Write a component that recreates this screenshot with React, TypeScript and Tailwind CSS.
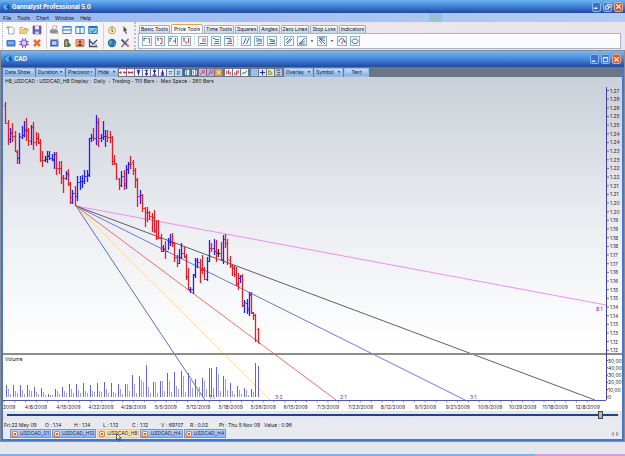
import { useState } from "react"
import type { ReactNode } from "react"

type Tone = "r" | "b" | "k"
// x, high, low, open, close, tone
type Bar = [number, number, number, number, number, Tone]

const bars: Bar[] = [
  [5, 102, 124, 105, 123, "r"], [8, 120, 145, 123, 139, "r"], [10, 128, 143, 139, 133, "b"],
  [12, 123, 142, 132, 136, "r"], [15, 131, 152, 136, 151, "r"], [17, 150, 164, 152, 157, "r"],
  [19, 133, 164, 158, 136, "b"], [22, 126, 139, 137, 135, "b"], [24, 121, 137, 135, 130, "b"],
  [26, 118, 141, 129, 130, "r"], [28, 128, 146, 131, 140, "r"], [31, 125, 145, 141, 127, "b"],
  [33, 122, 150, 127, 142, "r"], [36, 132, 146, 142, 138, "r"], [38, 133, 144, 138, 142, "r"],
  [40, 139, 162, 143, 160, "r"], [42, 151, 167, 160, 160, "r"], [45, 156, 162, 160, 159, "k"],
  [47, 151, 163, 159, 155, "b"], [49, 151, 160, 156, 158, "b"], [52, 154, 161, 158, 159, "b"],
  [54, 152, 169, 160, 154, "b"], [56, 152, 175, 154, 168, "r"], [59, 161, 174, 168, 168, "r"],
  [61, 161, 184, 168, 178, "r"], [63, 175, 193, 177, 178, "r"], [66, 171, 180, 178, 174, "b"],
  [68, 169, 186, 173, 183, "r"], [70, 182, 204, 184, 197, "r"], [72, 190, 204, 202, 193, "b"],
  [75, 186, 206, 193, 196, "r"], [77, 176, 201, 196, 182, "b"], [80, 176, 190, 182, 181, "b"],
  [82, 175, 188, 181, 181, "b"], [84, 170, 184, 181, 176, "b"], [87, 170, 182, 176, 174, "b"],
  [89, 138, 177, 175, 138, "b"], [91, 134, 142, 138, 137, "b"], [93, 128, 141, 137, 138, "r"],
  [96, 115, 145, 138, 122, "b"], [98, 118, 147, 122, 138, "r"], [101, 134, 142, 138, 137, "b"],
  [103, 121, 140, 137, 136, "b"], [105, 130, 147, 136, 136, "b"], [107, 130, 142, 136, 137, "r"],
  [110, 131, 143, 137, 137, "r"], [112, 136, 165, 137, 161, "r"], [114, 155, 165, 161, 163, "r"],
  [116, 163, 180, 163, 177, "r"], [119, 178, 190, 179, 185, "r"], [121, 171, 187, 185, 176, "b"],
  [124, 170, 190, 176, 183, "r"], [126, 165, 189, 185, 169, "b"], [128, 162, 174, 169, 164, "b"],
  [130, 156, 169, 163, 164, "r"], [133, 160, 175, 162, 170, "r"], [135, 168, 188, 170, 179, "r"],
  [137, 178, 207, 180, 196, "r"], [140, 190, 204, 196, 195, "b"], [142, 194, 212, 195, 208, "r"],
  [145, 207, 227, 208, 212, "r"], [147, 207, 222, 212, 212, "r"], [149, 211, 220, 212, 216, "r"],
  [152, 213, 232, 216, 217, "r"], [154, 210, 233, 217, 230, "r"], [156, 220, 240, 231, 238, "r"],
  [158, 220, 239, 238, 238, "r"], [161, 234, 252, 238, 247, "r"], [163, 245, 252, 251, 249, "b"],
  [165, 241, 259, 248, 251, "r"], [168, 238, 250, 251, 242, "b"], [170, 234, 246, 242, 241, "b"],
  [172, 233, 247, 242, 243, "r"], [174, 242, 262, 243, 257, "r"], [177, 255, 267, 257, 263, "r"],
  [179, 249, 264, 263, 257, "b"], [181, 243, 259, 257, 253, "b"], [184, 246, 258, 253, 256, "r"],
  [186, 254, 280, 257, 276, "r"], [188, 268, 290, 277, 289, "r"], [190, 287, 293, 290, 289, "b"],
  [193, 274, 294, 289, 275, "b"], [195, 258, 278, 274, 260, "b"], [197, 258, 268, 260, 262, "b"],
  [200, 259, 283, 262, 270, "r"], [202, 255, 274, 269, 268, "r"], [204, 267, 280, 270, 279, "r"],
  [207, 257, 281, 279, 261, "b"], [209, 240, 262, 261, 248, "b"], [211, 243, 252, 248, 248, "r"],
  [214, 239, 255, 248, 251, "b"], [216, 240, 262, 251, 252, "r"], [218, 249, 257, 253, 253, "k"],
  [221, 242, 260, 253, 259, "r"], [223, 235, 264, 260, 239, "b"], [225, 234, 248, 239, 243, "r"],
  [227, 239, 265, 243, 259, "r"], [230, 256, 268, 260, 265, "r"], [232, 265, 276, 265, 268, "r"],
  [234, 265, 277, 267, 274, "r"], [236, 267, 286, 274, 283, "r"], [238, 273, 290, 284, 278, "r"],
  [240, 275, 283, 278, 276, "b"], [242, 274, 307, 276, 305, "r"], [244, 300, 313, 305, 302, "b"],
  [247, 299, 314, 303, 308, "b"], [249, 292, 316, 310, 294, "b"], [251, 292, 314, 295, 312, "r"],
  [253, 312, 320, 313, 315, "r"], [255, 314, 342, 315, 340, "r"], [258, 328, 343, 329, 343, "r"],
]

const volume = [
  12, 8, 3, 12, 6, 4, 12, 7, 3, 12, 7, 6, 10, 5, 3, 9, 5, 2, 3, 2, 2, 8, 6, 3, 10, 6, 4, 13, 8, 4,
  13, 7, 4, 14, 6, 4, 12, 6, 5, 14, 6, 5, 15, 8, 4, 14, 5, 4, 13, 8, 3, 13, 13, 6, 22, 13, 4, 21,
  17, 15, 32, 10, 4, 15, 15, 4, 16, 16, 6, 24, 16, 5, 25, 11, 8, 26, 21, 5, 24, 17, 9, 18, 8, 10,
  19, 16, 8, 29, 29, 9, 30, 23, 6, 21, 18, 7, 14, 6, 3, 11, 7, 3, 9, 7, 2, 8, 5, 34, 31,
]

const dates = [
  "4/8/2009", "4/15/2009", "4/22/2009", "4/28/2009", "5/5/2009", "5/12/2009", "5/18/2009",
  "5/26/2009", "6/15/2009", "7/3/2009", "7/23/2009", "8/12/2009", "9/1/2009", "9/21/2009",
  "10/9/2009", "10/29/2009", "11/18/2009", "12/8/2009",
]

const prices = Array.from({ length: 31 }, (_, i) => (1.27 - Math.ceil(i / 2) / 100).toFixed(2))

const fan = [
  { x: 606, y: 305, color: "#f072f0" },
  { x: 595, y: 400, color: "#3a3a3a" },
  { x: 465, y: 400, color: "#4a58d0" },
  { x: 336, y: 400, color: "#f04848" },
  { x: 270, y: 400, color: "#f8d488" },
  { x: 205, y: 400, color: "#3a4aa0" },
]

const ratios: [string, number, number][] = [
  ["8:1", 596, 311],
  ["1:1", 209, 399],
  ["3:2", 275, 399],
  ["2:1", 340, 399],
  ["3:1", 470, 399],
]

const tones = { r: "#e81c28", b: "#2020f8", k: "#222222" }

function Chart() {
  return (
    <svg viewBox="3 86 619 325" className="block h-auto w-full" fontSize="5">
      {fan.map((l) => (
        <line key={l.color} x1="76" y1="206" x2={l.x} y2={l.y} stroke={l.color} strokeWidth="0.8" />
      ))}
      {bars.map(([x, high, low, open, close, tone]) => (
        <g key={x} stroke={tones[tone]}>
          <path d={`M${x + 0.5} ${high}V${low}`} strokeWidth="1.3" />
          <path d={`M${x - 1} ${open}.5h1.5M${x + 0.5} ${close}.5h1.5`} strokeWidth="0.8" />
        </g>
      ))}

      <rect x="3" y="353" width="619" height="2" fill="#8c8c88" />
      <text x="5" y="361" fill="#222">Volume</text>
      {volume.map((h, i) => (
        <rect
          key={i}
          x={Math.round(5.6 + i * 2.333)}
          y={397 - h}
          width="1"
          height={h}
          fill={i % 3 === 0 || h > 27 ? "#6060ec" : "#a0a0c8"}
        />
      ))}

      <path d="M3 400.5H606" stroke="#5454a8" />
      <path d="M606.5 87V400" stroke="#4040a8" />
      {prices.map((p, i) => (
        <g key={i}>
          <path d={`M607 ${90.5 + i * 8.66}h2`} stroke="#4040a8" strokeWidth="0.8" />
          <text x="610" y={92.5 + i * 8.66} fill="#3c2440">{p}</text>
        </g>
      ))}
      {["50,00", "40,00", "30,00", "20,00", "10,00", "0"].map((v, i) => (
        <g key={v}>
          <path d={`M607 ${360.5 + i * 7.3}h1`} stroke="#333" strokeWidth="0.8" />
          <text x="608" y={362.5 + i * 7.3} fill="#222">{v}</text>
        </g>
      ))}
      {Array.from({ length: 55 }, (_, i) => (
        <path key={i} d={`M${4 + i * 10.8} 401v1.5`} stroke="#5454a8" strokeWidth="0.7" />
      ))}
      <text x="3" y="409" fill="#222">2009</text>
      {dates.map((d, i) => (
        <text key={d} x={36 + i * 32.45} y="409" fill="#2c2430" textAnchor="middle">{d}</text>
      ))}
      {ratios.map(([label, x, y]) => (
        <text key={label} x={x} y={y} fill="#7a3080">{label}</text>
      ))}
    </svg>
  )
}

function Icon({ children, label }: { children: ReactNode; label: string }) {
  return (
    <button aria-label={label} className="flex h-[13px] w-[13px] items-center justify-center">
      <svg viewBox="0 0 10 10" className="h-[10px] w-[10px]" fill="none">
        {children}
      </svg>
    </button>
  )
}

function Grip() {
  return <span className="mx-px w-px self-stretch border-l border-dotted border-[#b0b0bc]" />
}

function MainTools() {
  return (
    <div className="flex shrink-0 flex-col py-px">
      <div className="flex items-center pl-px">
        <Grip />
        <div className="flex w-[42px]">
          <Icon label="New">
            <path d="M2.5 2h4L8 3.5V9H2.5z" fill="#fff" stroke="#8896b8" strokeWidth=".8" />
            <path d="M2 .5v4M0 2.5h4" stroke="#f0a040" />
          </Icon>
          <Icon label="Open">
            <path d="M1 8.5v-6h3l1 1h3v1" fill="#fff2c8" stroke="#b89858" strokeWidth=".8" />
            <path d="M1 8.5l2-4h6.5l-2 4z" fill="#f8d070" stroke="#c09850" strokeWidth=".6" />
          </Icon>
          <Icon label="Save">
            <path d="M1 1h8v8H1z" fill="#6c5cb0" stroke="#50449a" strokeWidth=".6" />
            <path d="M3 1h4v3.5H3z" fill="#e8e8f8" />
            <path d="M3 6.5h4V9H3z" fill="#c8c4e0" />
          </Icon>
        </div>
        <div className="flex w-[57px] border-l border-[#d4d0dc]">
          <Icon label="Print">
            <path d="M3 4l1-3h4L7 4z" fill="#fff" stroke="#888" strokeWidth=".6" />
            <path d="M1 4.5h7l1 1.5v2.5H2L1 7.5z" fill="#8c8c9c" />
            <path d="M7 7l2.5 2" stroke="#e89838" />
          </Icon>
          <Icon label="Tile horizontally">
            <path d="M.8 1.5h8.4v7H.8z" fill="#e8f8ff" stroke="#4888c8" />
            <path d="M1 5h8M1 2h8" stroke="#3474c0" />
          </Icon>
          <Icon label="Tile vertically">
            <path d="M.8 1.5h8.4v7H.8z" fill="#e8f8ff" stroke="#4888c8" />
            <path d="M5 1v8M1 2h8" stroke="#3474c0" />
          </Icon>
          <Icon label="Arrange">
            <path d="M.8 1.5h8.4v7H.8z" fill="#80d4f0" stroke="#3474c0" />
            <path d="M1 2h8" stroke="#2454b0" strokeWidth="1.5" />
            <path d="M3 5.5l1.5 2 3-3.5" stroke="#285898" />
          </Icon>
        </div>
        <div className="flex border-l border-[#d4d0dc] pl-px">
          <Icon label="Clock">
            <circle cx="5" cy="5.5" r="3.5" fill="#fbe8b0" stroke="#b89860" strokeWidth=".8" />
            <path d="M5 3.5v3h1M5 1v1" stroke="#705c38" />
          </Icon>
          <Icon label="Pointer">
            <path d="M3.5 1l4 4.5H5.5l1.5 3-1 .5-1.5-3-1 1z" fill="#585048" />
          </Icon>
        </div>
      </div>
      <div className="flex items-center pl-px">
        <Grip />
        <div className="flex w-[42px]">
          <Icon label="Display">
            <rect x=".5" y="2" width="9" height="6.5" rx="1" fill="#3c78cc" />
            <path d="M2 3.5h6v3H2z" fill="#78b0ec" />
          </Icon>
          <Icon label="Settings">
            <circle cx="5" cy="5" r="3" fill="#b4e0f8" stroke="#9040d8" strokeWidth="1.2" />
            <path d="M3.5 0v2M6.5 0v2M3.5 8v2M6.5 8v2M0 3.5h2M0 6.5h2M8 3.5h2M8 6.5h2" stroke="#d048d8" />
          </Icon>
          <Icon label="Delete">
            <path d="M2 2l6 6M8 2L2 8" stroke="#e87028" strokeWidth="2.6" />
          </Icon>
        </div>
        <div className="flex w-[57px] border-l border-[#d4d0dc]">
          <Icon label="Film">
            <path d="M1 1.5h8.5v7H1z" fill="#4460b8" />
            <path d="M3 3.2h4.5v3.6H3z" fill="#b8d4f4" />
            <path d="M1.6 2v6M9 2v6" stroke="#dce8fc" strokeDasharray="1 1" strokeWidth=".7" />
          </Icon>
          <Icon label="Exit">
            <path d="M2 9V3l1-2h3l1 2v6z" fill="#786858" />
            <path d="M3.5 3h2v5h-2z" fill="#b8a890" />
            <path d="M5 7h4M7 5v4" stroke="#30883c" strokeWidth="1.4" />
          </Icon>
          <Icon label="Picture">
            <path d="M1 1.5h8v7H1z" fill="#f0a078" stroke="#c07050" strokeWidth=".8" />
            <circle cx="5" cy="4" r="1.4" fill="#8c3c28" />
            <path d="M2.5 8c1-3 4-3 5 0z" fill="#8c3c28" />
          </Icon>
          <Icon label="Chart">
            <path d="M1.5 1v7.5H9.5" stroke="#305098" strokeWidth="1.3" />
            <path d="M2 3l3 3 4-4" stroke="#28387c" strokeWidth="1.1" />
            <path d="M3 8l3-2.5L9 7" stroke="#e07048" />
          </Icon>
        </div>
        <div className="flex border-l border-[#d4d0dc] pl-px">
          <Icon label="Web">
            <circle cx="5" cy="5" r="4.2" fill="#2c6cc0" />
            <path d="M2 3.5C4 1.5 6 3 5 5S3 7 2 5.5zM6 6l2.5-1.5L8 7.5z" fill="#58b858" />
          </Icon>
          <Icon label="Tools">
            <path d="M1.5 1.5l7 7" stroke="#3c50a8" strokeWidth="1.8" />
            <path d="M8.5 1l-7 8" stroke="#6c6878" strokeWidth="1.4" />
            <path d="M6.5 6.5l2.5 2" stroke="#e89040" strokeWidth="1.8" />
          </Icon>
        </div>
      </div>
    </div>
  )
}

const tabs = ["Basic Tools", "Price Tools", "Time Tools", "Squares", "Angles", "Zero Lines", "Stop Loss", "Indicators"]

const priceGroups: { name: string; blue: string; red?: string; menu?: boolean }[][] = [
  [
    { name: "Price 1", blue: "M2 2.5h2.5M2 2v3", red: "M6 2.5h1.5v5" },
    { name: "Price 2", blue: "M2 2.5h2M3 2v3", red: "M5 2.5h2v5M5 7.5h2" },
    { name: "Price 3", blue: "M2 2.5h2M2 2v4", red: "M7.5 2v5.5M5 5h2" },
    { name: "Price 4", blue: "M2 2.5h2M3 2v4", red: "M7.5 2v5M5 5v2.5h1" },
  ],
  [
    { name: "Levels 1", blue: "M2 7.5h6", red: "M4 3h4M4 5h4" },
    { name: "Levels 2", blue: "M2 2.5h2M3 7.5h5", red: "M4 3.5h4M4 5.5h4" },
    { name: "Levels 3", blue: "M2 2.5h5M3 7.5h5", red: "M5 4h3M4 5.7h4" },
  ],
  [
    { name: "Parallel", blue: "M2.5 8l2.5-6M5.5 8L8 2" },
    { name: "Fork", blue: "M2 2.5l6 1.5M2 5h6M8 7l-5 1" },
    { name: "Channel", blue: "M2 3l6 1.5M2 7.5h6M3 5l5 1" },
  ],
  [
    { name: "Fan lines", blue: "M3 8l5-5M2 7l5-5", red: "M2 4l2-2" },
    { name: "Gann fan", blue: "M2 8l6-6M2 8l6-3M2 8h6", menu: true },
    { name: "Down fan", blue: "M2 2l6 6M2 2h6M2 2l6 3", red: "M2 4l3 4", menu: true },
    { name: "Arcs", blue: "M2 6c0-5 6-4 6 0M4 7h2", red: "M5 5h3v2" },
    { name: "Ellipse", blue: "M5 3C1 3 1 7.5 5 7.5S9 3 5 3z" },
  ],
]

function PriceTools() {
  return (
    <div className="mt-[2px] mr-[4px] ml-[2px] min-w-0 flex-1">
      <div className="flex h-[9px] items-end gap-px pl-px" role="tablist">
        {tabs.map((t) => (
          <button
            key={t}
            role="tab"
            aria-selected={t === "Price Tools"}
            className={
              t === "Price Tools"
                ? "h-[9px] rounded-t-xs border border-b-0 border-t-[#e8a050] border-x-[#a8b0c0] bg-[#fafaff] px-[2px] leading-[7px]"
                : "h-[8px] rounded-t-xs border border-b-0 border-[#a0acc0] bg-linear-to-b from-white to-[#c4d0e4] px-px leading-[7px]"
            }
          >
            {t}
          </button>
        ))}
      </div>
      <div className="flex h-[16px] items-center gap-[3px] border border-[#a8b4cc] bg-[#fafbfe] px-[3px]">
        {priceGroups.map((group, i) => (
          <div key={i} className="flex items-center gap-[3px] border-r border-dotted border-[#c4c8d8] pr-[3px] last:border-0">
            {group.map((g) => (
              <button key={g.name} aria-label={g.name} className="flex items-center">
                <svg viewBox="0 0 10 10" className="h-[10px] w-[10px]" fill="none">
                  <rect x=".5" y=".5" width="9" height="9" fill="#f4fafc" stroke="#8cb4bc" />
                  <path d={g.blue} stroke="#4458a0" strokeWidth=".9" />
                  {g.red && <path d={g.red} stroke="#e04848" />}
                </svg>
                {g.menu && (
                  <svg viewBox="0 0 6 6" className="ml-[3px] h-[4px] w-[4px]">
                    <path d="M1 2h4L3 4.5z" fill="#333" />
                  </svg>
                )}
              </button>
            ))}
          </div>
        ))}
      </div>
    </div>
  )
}

function WindowButtons({ restore }: { restore?: boolean }) {
  return (
    <div className="ml-auto flex gap-[2px]">
      <button aria-label="Minimize" className="h-[10px] w-[9px] rounded-xs border border-[#8cb8ec] bg-[#3c70c4]">
        <svg viewBox="0 0 8 8"><path d="M1 6h4" stroke="#fff" strokeWidth="1.5" /></svg>
      </button>
      <button aria-label="Restore" className="h-[10px] w-[9px] rounded-xs border border-[#8cb8ec] bg-[#3c70c4]">
        <svg viewBox="0 0 8 8" fill="none" stroke="#fff">
          <path d={restore ? "M1.5 3.5h3.5v3.5H1.5zM3.5 3V1.5H7V5H5.5" : "M1.5 1.5h5v5h-5zM1.5 2.2h5"} />
        </svg>
      </button>
      <button aria-label="Close" className="h-[10px] w-[9px] rounded-xs border border-[#eca888] bg-[#d05c34]">
        <svg viewBox="0 0 8 8"><path d="M1.5 1.5l5 5M6.5 1.5l-5 5" stroke="#fff" strokeWidth="1.4" /></svg>
      </button>
    </div>
  )
}

function Logo() {
  return (
    <svg viewBox="0 0 8 8" className="h-[8px] w-[8px]">
      <circle cx="4" cy="4" r="3.6" fill="#1c50b0" />
      <path d="M1 4a3 3 0 015-2.2L4 4l2 2A3 3 0 011 4z" fill="#50b4f0" />
    </svg>
  )
}

const chartIcons: { name: string; d: string; color: string; bg?: string; wide?: boolean }[] = [
  { name: "Compress", d: "M0 4h3M8 4H5M2 2.5v3M6 2.5v3", color: "#e02828" },
  { name: "Expand", d: "M1 4h6M2 2.5v3M6 2.5v3", color: "#e02828" },
  { name: "Top", d: "M2 1.5h4M4 2v5M2.5 4L4 2l1.5 2", color: "#2424c8" },
  { name: "Raise", d: "M2 1.5h4M4 2v5M2.5 5L4 7l1.5-2", color: "#2424c8" },
  { name: "Up", d: "M4 1v5M2.5 3L4 1l1.5 2M2 7h4", color: "#2424c8" },
  { name: "Down", d: "M4 1v5M2.5 4L4 6l1.5-2M2 7h4", color: "#2424c8" },
  { name: "Rows", d: "M2 3h4M2 5.5h4", color: "#5080c8", bg: "#d4e4f8" },
  { name: "Lines", d: "M2 2.5h4M2 4.5h4M2 6h3", color: "#4474c4", bg: "#c4dcf8" },
  { name: "Previous", d: "M3 1.5v5M5 1.5h1.5v5H5z", color: "#fff", bg: "#2c6cc0" },
  { name: "Next", d: "M2 1.5h2v5H2zM6 1.5v5", color: "#fff", bg: "#2c6cc0" },
  { name: "Zoom in", d: "M5 1.5a1.5 1.5 0 100 3 1.5 1.5 0 000-3zM4 4L1 7", color: "#e04870", bg: "#a8c8f0" },
  { name: "Zoom out", d: "M5 1.5a1.5 1.5 0 100 3 1.5 1.5 0 000-3zM4 4L1 7", color: "#d05088", bg: "#98bcec" },
  { name: "Reset", d: "M2 2l4 4M6 2L2 6", color: "#fff0d0", bg: "#f09838", wide: true },
  { name: "Bars", d: "M2 2v4M4 1v5M6 3v4", color: "#d03c3c" },
  { name: "Candles", d: "M2 4v3M4 2v5M6 1v4", color: "#c83838" },
  { name: "Line", d: "M1 6l2-2 1 1 3-3", color: "#38a040", wide: true },
  { name: "Panel", d: "M2 2h4v4H2z", color: "#80b4f0", bg: "#a4ccf8" },
  { name: "Crosshair", d: "M4 1v6M1 4h6", color: "#2030a8", bg: "#d8ecfc" },
  { name: "Trend", d: "M2 1v5h4M3 2l3 3", color: "#78943c", bg: "#f4e8b8" },
  { name: "Count", d: "M2 1.5h4M3 4h3M2 6.5h4", color: "#504870", bg: "#c0c4dc" },
]

function BarButton({ children, menu, width }: { children: string; menu?: boolean; width: string }) {
  return (
    <button
      className={`flex h-[9px] items-center justify-between border border-[#9cbce8] bg-linear-to-b from-[#c4dcf8] to-[#88b0e4] px-px leading-[7px] whitespace-nowrap ${width}`}
    >
      {children}
      {menu && (
        <svg viewBox="0 0 6 6" className="h-[4px] w-[4px]">
          <path d="M1 2h4L3 4.5z" fill="#222" />
        </svg>
      )}
    </button>
  )
}

function ChartToolbar() {
  return (
    <div className="flex h-[10px] items-center gap-px bg-[#6a7686]">
      <BarButton width="w-[32px]">Data Show</BarButton>
      <BarButton width="w-[29px]" menu>Duration</BarButton>
      <BarButton width="w-[29px]" menu>Precision</BarButton>
      <BarButton width="w-[22px]" menu>Hide</BarButton>
      <div className="flex gap-px pr-px">
        {chartIcons.map((c) => (
          <button key={c.name} aria-label={c.name} className={c.wide ? "mr-[2px]" : ""}>
            <svg viewBox="0 0 8 8" className="block h-[7px] w-[7px]" fill="none">
              <rect width="8" height="8" fill={c.bg ?? "#f4f6fc"} />
              <path d={c.d} stroke={c.color} strokeWidth="1.2" />
            </svg>
          </button>
        ))}
      </div>
      <BarButton width="w-[29px]" menu>Overlay</BarButton>
      <BarButton width="w-[29px]" menu>Symbol</BarButton>
      <button className="h-[9px] w-[25px] border border-[#9cbce8] bg-linear-to-b from-[#c4dcf8] to-[#88b0e4] leading-[7px]">
        Text
      </button>
    </div>
  )
}

const readings = ["O : 1.14", "H : 1.14", "L : 1.12", "C : 1.12", "V : 69707", "R : 0.02"]
const sheets = ["USDCAD_D1", "USDCAD_H12", "USDCAD_H8", "USDCAD_H4", "USDCAD_H4"]

function SheetTabs() {
  return (
    <nav className="flex h-[10px] items-start gap-px bg-[#e9eaf0] pl-[7px] text-[#1c2c60]">
      {sheets.map((s, i) => (
        <button
          key={i}
          className={
            i === 2
              ? "relative flex h-[9px] items-center gap-[2px] border border-[#e8c890] bg-[#fce0a8] px-px leading-[7px]"
              : "flex h-[9px] items-center gap-[2px] border border-[#7098d8] bg-linear-to-b from-[#b8d4f8] to-[#8cb4ec] px-px leading-[7px]"
          }
        >
          <svg viewBox="0 0 7 7" className="h-[6px] w-[6px]" fill="none">
            <rect x=".5" y=".5" width="6" height="6" rx="1" fill="#fff0e0" stroke="#e06028" />
            <path d="M2 2l3 3M5 2L2 5" stroke="#d04818" />
          </svg>
          {s}
          {i === 2 && (
            <svg viewBox="0 0 6 9" className="absolute top-[3px] left-[18px] h-[9px] w-[6px]">
              <path d="M.5.5v6.5L2 5.5 3.2 8.3l1-.5L3 5.2h2.2z" fill="#fff" stroke="#222" strokeWidth=".7" />
            </svg>
          )}
        </button>
      ))}
      <span className="ml-auto flex h-full items-center gap-[2px] pr-[2px]">
        <svg viewBox="0 0 10 6" className="h-[6px] w-[10px]" fill="none" stroke="#a0a0a8">
          <path d="M3.5 1l-2 2 2 2zM6.5 1l2 2-2 2z" />
        </svg>
      </span>
    </nav>
  )
}

export default function App() {
  const [position, setPosition] = useState(195)

  return (
    <div className="flex min-h-screen flex-col overflow-hidden bg-[#e6e7ec] font-['Inter','Liberation_Sans',sans-serif] text-[5px] leading-[8px] text-[#101218]">
      <header className="flex h-[13px] items-center gap-[2px] bg-linear-to-b from-[#6cb4f4] via-[#3f80d4] to-[#2448a0] px-[2px]">
        <Logo />
        <h1 className="text-[6px] font-bold text-white">Gannalyst Professional 5.0</h1>
        <WindowButtons restore />
      </header>
      <nav className="flex h-[9px] items-center bg-linear-to-r from-[#98b8f0] to-[#b4ccf4] pl-[3px]">
        {["File", "Tools", "Chart", "Window", "Help"].map((m) => (
          <button key={m} className="mr-[6px]">{m}</button>
        ))}
        <span className="ml-auto h-full w-[13px] bg-[#94c4cc]" />
        <span className="w-[183px]" />
      </nav>
      <section className="flex h-[28px] bg-linear-to-r from-[#fafafc] via-[#ece6ea] to-[#e8e4ea]">
        <MainTools />
        <span className="ml-[3px] border-l-2 border-dotted border-[#c0c0cc]" />
        <PriceTools />
      </section>

      <main className="border-x border-t border-[#8c8c90]">
        <div className="border-x-2 border-b-2 border-[#4478d0]">
          <header className="-mx-[2px] flex h-[16px] items-center gap-[2px] bg-linear-to-b from-[#78b8f4] via-[#4488dc] to-[#2448a0] px-[3px]">
            <Logo />
            <h2 className="text-[6px] font-bold text-white">CAD</h2>
            <WindowButtons />
          </header>
          <ChartToolbar />
          <div className="bg-linear-to-b from-[#cad0d8] via-[#eceef2] via-45% to-white to-80%">
            <p className="h-[9px] pl-[2px] whitespace-pre">
              {"H8_USDCAD : USDCAD_H8 Display :  Daily  - Trading - 110 Bars -  Max Space - 260 Bars"}
            </p>
            <Chart />
          </div>
          <div className="flex h-[8px] items-center bg-[#e4e7ee] px-[4px]">
            <input
              type="range"
              aria-label="Scroll chart"
              max={200}
              value={position}
              onChange={(e) => setPosition(Number(e.target.value))}
              className="h-[8px] w-full appearance-none bg-transparent [&::-webkit-slider-runnable-track]:h-[2px] [&::-webkit-slider-runnable-track]:bg-[#1c448c] [&::-webkit-slider-thumb]:-mt-[3px] [&::-webkit-slider-thumb]:h-[8px] [&::-webkit-slider-thumb]:w-[5px] [&::-webkit-slider-thumb]:appearance-none [&::-webkit-slider-thumb]:border [&::-webkit-slider-thumb]:border-[#444] [&::-webkit-slider-thumb]:bg-[#b4b8bc]"
            />
          </div>
          <div className="flex h-[10px] items-center bg-[#e9eaf0] pt-[2px] pl-px whitespace-nowrap">
            <span className="w-[41px]">Fri:22 May 09</span>
            {readings.map((r) => (
              <span key={r} className="w-[29px]">{r}</span>
            ))}
            <span className="w-[45px]">Pt : Thu 5 Nov 09</span>
            <span>Value : 0.96</span>
          </div>
          <SheetTabs />
        </div>
        <div className="h-px bg-[#8c8c90]" />
      </main>
      <footer className="mt-auto flex h-[2px] bg-[#78b0ec]">
        <span className="ml-auto w-[90px] bg-[#e098e8]" />
      </footer>
    </div>
  )
}
